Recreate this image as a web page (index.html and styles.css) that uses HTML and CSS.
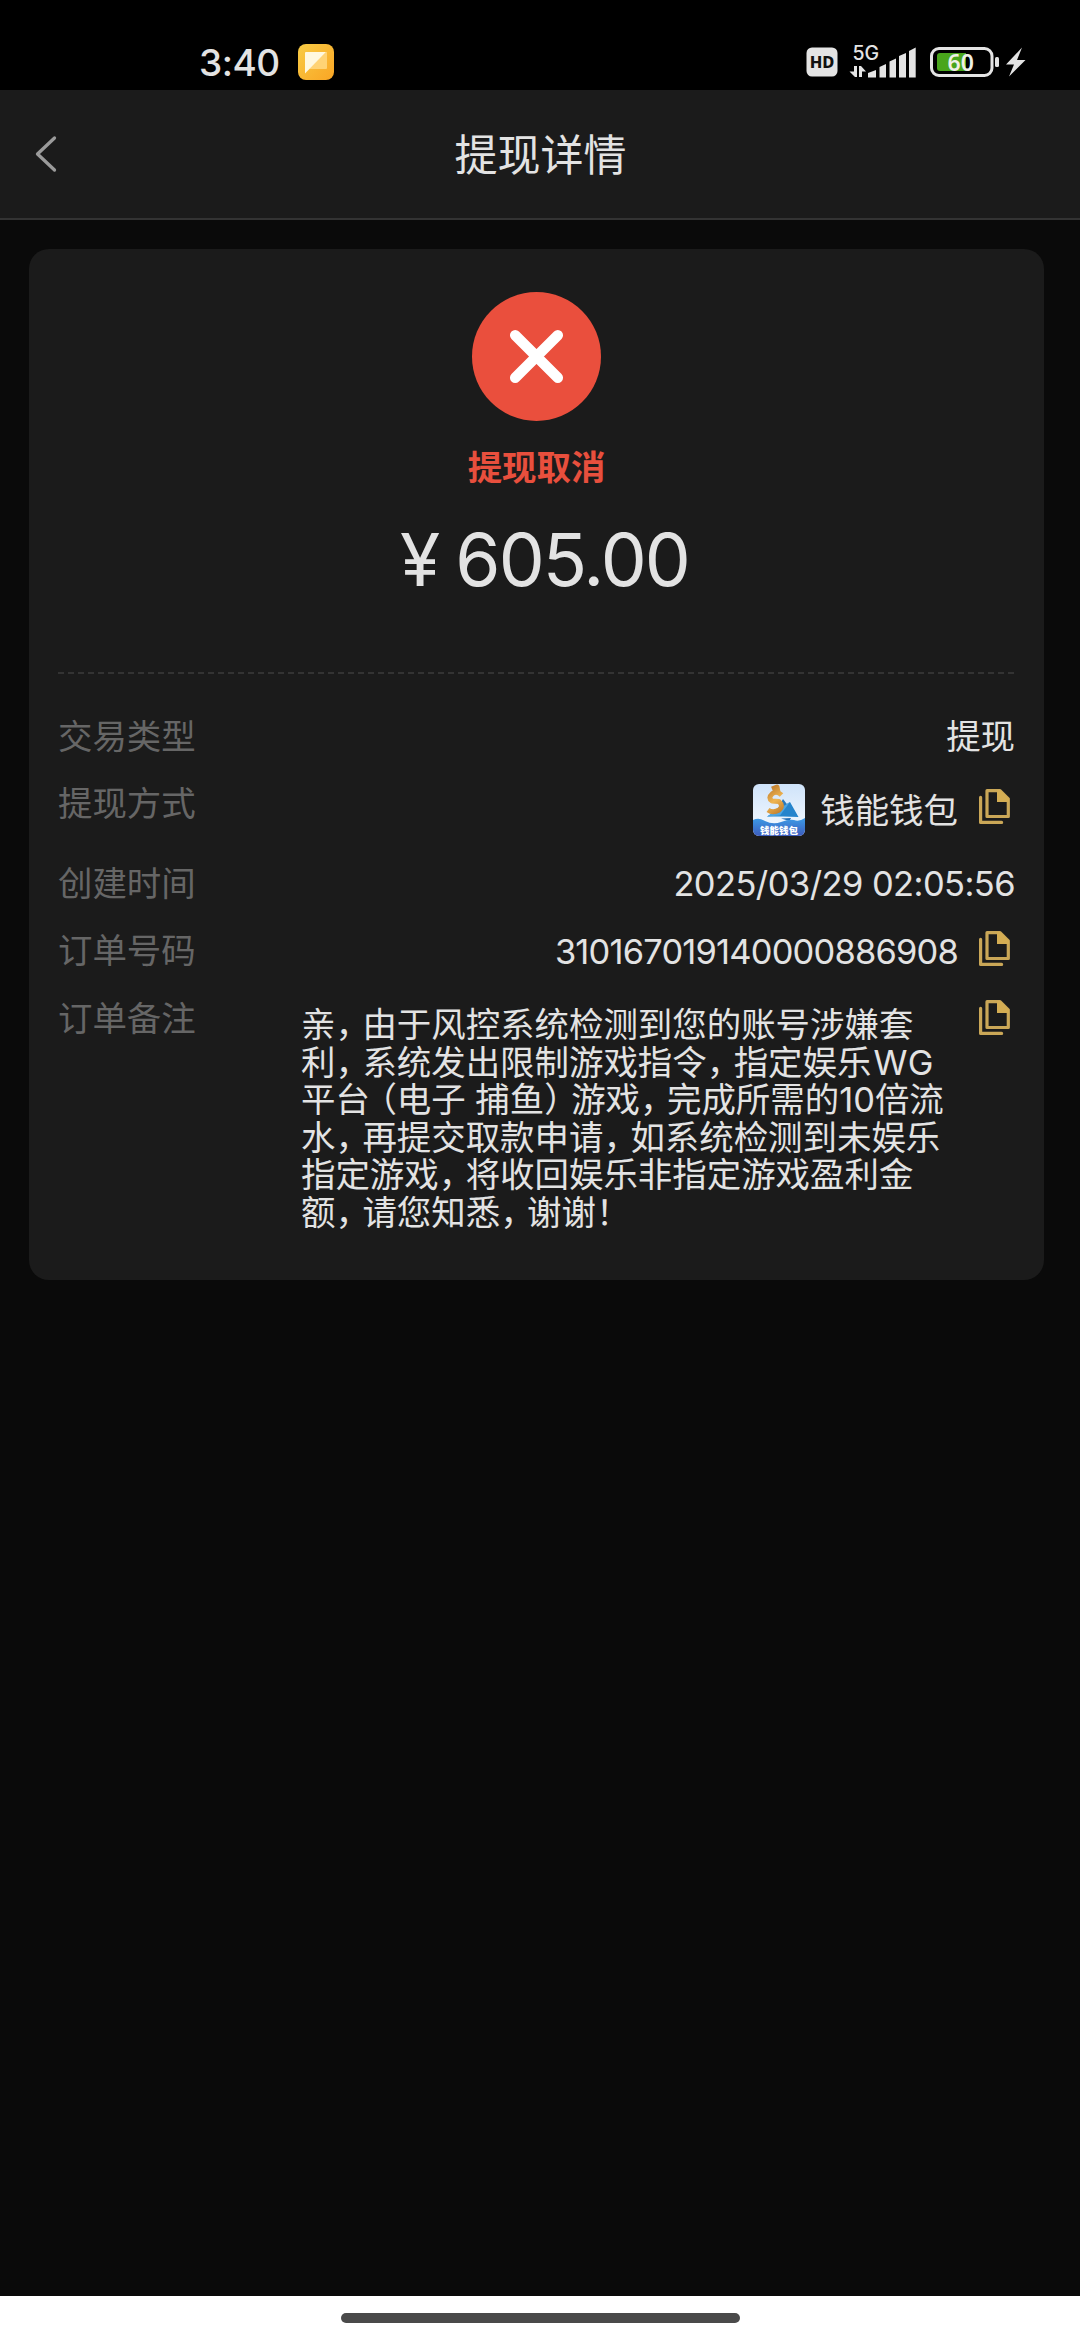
FILE: index.html
```html
<!DOCTYPE html>
<html lang="zh-CN">
<head>
<meta charset="utf-8">
<title>提现详情</title>
<link rel="stylesheet" href="styles.css">
</head>
<body>
<svg class="defs" width="0" height="0" aria-hidden="true">
  <symbol id="copy" viewBox="0 0 31 35">
    <path d="M1.6 8.4V33.4H22.6" fill="none" stroke="#caa757" stroke-width="3.200" stroke-linecap="round" stroke-linejoin="round"/>
    <path d="M8 1.7H21L29.3 9.8V27.5H8Z" fill="none" stroke="#caa757" stroke-width="3.200" stroke-linejoin="round"/>
    <path d="M18 1V13H30V9.5L21.4 1Z" fill="#d4ad53"/>
  </symbol>
</svg>
<div class="screen">
  <div class="statusbar">
    <div class="clock">3:40</div>
    <svg class="app-badge" viewBox="0 0 36 36">
      <defs>
        <linearGradient id="badge" x1="0" y1="0" x2="1" y2="1"><stop offset="0" stop-color="#f8cc45"/><stop offset="1" stop-color="#faa524"/></linearGradient>
      </defs>
      <rect width="36" height="36" rx="8" fill="url(#badge)"/>
      <path d="M28 8H29V24Q29 25 28 25H11Z" fill="#ffd375"/>
      <path d="M8 8H28L7 29.5V9Q7 8 8 8Z" fill="#fff8df"/>
    </svg>
    <svg class="system" viewBox="800 40 230 42">
      <rect x="806.500" y="47.500" width="31" height="29" rx="5.500" fill="#e4e4e4"/>
      <text x="822" y="68" class="hd" text-anchor="middle">HD</text>
      <text x="852.500" y="60" class="net" textLength="26.500">5G</text>
      <g fill="#e4e4e4">
        <path d="M854 66H857V77H855L849.500 71.500H854Z"/>
        <path d="M859 77V66H861L866 71.500H862V77Z"/>
        <path d="M868 77.500V73L876 70V77.500ZM879.500 77.500V67L886 64V77.500ZM889.500 77.500V61.500L896 58.500V77.500ZM899 77.500V56L906 53V77.500ZM909 77.500V51L915.700 47.500V77.500Z"/>
        <rect x="995" y="57" width="4" height="10" rx="1.500"/>
        <path d="M1022 47.500L1006 64.500H1014L1009 76.500L1025.500 60H1017Z"/>
      </g>
      <rect x="931.500" y="48.500" width="60.500" height="27" rx="7.500" fill="none" stroke="#e4e4e4" stroke-width="3"/>
      <path d="M940 53H966V71H940Q937 71 937 68V56Q937 53 940 53Z" fill="#49a51c"/>
      <text x="947.500" y="71" class="level">60</text>
    </svg>
  </div>

  <header class="navbar">
    <svg class="back" viewBox="0 0 24 38"><path d="M20.500 3L3.500 19L20.500 35" fill="none" stroke="#9b9b9b" stroke-width="3.300" stroke-linecap="round" stroke-linejoin="round"/></svg>
    <h1 class="title">提现详情</h1>
  </header>

  <main class="content">
    <section class="card">
      <svg class="result" viewBox="0 0 129 129"><circle cx="64.500" cy="64.500" r="64.500" fill="#ea4f3d"/><path d="M43.200 43.200L85.800 85.800M85.800 43.200L43.200 85.800" stroke="#fff" stroke-width="10.500" stroke-linecap="round"/></svg>
      <div class="status">提现取消</div>
      <div class="amount"><span class="yen">¥</span><span>605.00</span></div>
      <div class="divider"></div>
      <div class="rows">
        <div class="row"><div class="label">交易类型</div><div class="value">提现</div></div>
        <div class="row row-method">
          <div class="label">提现方式</div>
          <div class="value">
            <svg class="wallet" viewBox="0 0 52 52">
              <defs>
                <linearGradient id="sky" x1="0" y1="0" x2="0" y2="1"><stop offset="0" stop-color="#cfe3fa"/><stop offset="1" stop-color="#f8fcff"/></linearGradient>
                <linearGradient id="sea" x1="0" y1="0" x2="0" y2="1"><stop offset="0" stop-color="#3c9be6"/><stop offset="1" stop-color="#3d5cbd"/></linearGradient>
                <linearGradient id="gold" gradientUnits="userSpaceOnUse" x1="13" y1="3" x2="31" y2="30"><stop offset="0" stop-color="#b97528"/><stop offset=".5" stop-color="#efb552"/><stop offset="1" stop-color="#b77326"/></linearGradient>
                <clipPath id="tile"><rect width="52" height="52" rx="6"/></clipPath>
              </defs>
              <g clip-path="url(#tile)">
                <rect width="52" height="52" fill="url(#sky)"/>
                <path d="M30 15L37 24L22 30Z" fill="#2779bd"/>
                <path d="M14 32.500L37 18L45.500 33L30 32.500Z" fill="#2584cc"/>
                <path d="M14 32.500L37 18L27 31.500Z" fill="#4ca5e2"/>
                <path d="M28 34.500L38 34L36.500 37Z" fill="#2270b8"/>
                <path d="M19 5L24 3L25 8M28.500 11Q24 6.500 19.500 9.500Q14.500 14 19 17L26 17.500Q31 22 26 26Q20 29.500 15 26" fill="none" stroke="url(#gold)" stroke-width="5" stroke-linejoin="round"/>
                <path d="M0 36Q6 33 12 37Q20 41 28 38Q36 35 41 36Q46 38 52 34V52H0Z" fill="url(#sea)"/>
                <text x="26" y="49.500" text-anchor="middle" class="wallet-name" textLength="38">钱能钱包</text>
              </g>
            </svg>
            <span class="method-name">钱能钱包</span>
            <svg class="copy"><use href="#copy"/></svg>
          </div>
        </div>
        <div class="row"><div class="label">创建时间</div><div class="value date">2025/03/29 02:05:56</div></div>
        <div class="row row-order"><div class="label">订单号码</div><div class="value"><span class="order">310167019140000886908</span><svg class="copy"><use href="#copy"/></svg></div></div>
        <div class="row row-note">
          <div class="label">订单备注</div>
          <div class="note">
            <span class="line">亲<i class="p">，</i>由于风控系统检测到您的账号涉嫌套</span>
            <span class="line">利<i class="p">，</i>系统发出限制游戏指令<i class="p">，</i>指定娱乐<span class="brand">WG</span></span>
            <span class="line">平台<i class="open">（</i>电子 捕鱼<i class="p">）</i>游戏<i class="p">，</i>完成所需的10倍流</span>
            <span class="line">水<i class="p">，</i>再提交取款申请<i class="p">，</i>如系统检测到未娱乐</span>
            <span class="line">指定游戏<i class="p">，</i>将收回娱乐非指定游戏盈利金</span>
            <span class="line">额<i class="p">，</i>请您知悉<i class="p">，</i>谢谢！</span>
          </div>
          <svg class="copy"><use href="#copy"/></svg>
        </div>
      </div>
    </section>
  </main>
  <footer class="gesture"><div class="pill"></div></footer>
</div>
</body>
</html>
```

FILE: styles.css
```css
* { box-sizing: border-box; }
body {
  margin: 0;
  background: #0a0a0a;
  color: #e3e3e3;
  font-family: Inter, "Noto Sans CJK SC", sans-serif;
  font-size: 34.45px;
}
svg { display: block; flex: none; }
.defs { position: absolute; }
.screen { display: flex; flex-direction: column; width: 1080px; height: 2340px; }

.statusbar { display: flex; height: 90px; padding-left: 199px; background: #000; }
.clock { width: 99px; padding-top: 40px; font-size: 37px; line-height: 45px; font-weight: 500; letter-spacing: -0.5px; }
.app-badge { width: 36px; height: 36px; margin-top: 44px; }
.system { width: 230px; height: 42px; margin: 40px 0 0 466px; }
.hd { font-family: "Noto Sans", sans-serif; font-size: 16.5px; font-weight: 800; fill: #111; }
.net { font-size: 19.5px; font-weight: 500; fill: #e4e4e4; }
.level { font-family: "Noto Sans", sans-serif; font-size: 23px; font-weight: 600; fill: #f0f0e6; }

.navbar { display: flex; align-items: center; height: 130px; padding-left: 34px; background: #1b1b1b; border-bottom: 2px solid #333; }
.back { width: 24px; height: 38px; }
.title { flex: 1; margin: 0 57px 0 0; padding-top: 1px; text-align: center; font-size: 43px; font-weight: 400; line-height: 60px; }

.content { flex: 1; padding: 29px 36px 0 29px; }
.card { display: flex; flex-direction: column; align-items: center; height: 1031px; padding: 43px 29px 0; border-radius: 20px; background: #1b1b1b; }
.result { width: 129px; height: 129px; }
.status { margin-top: 22px; color: #e84f3d; font-weight: 700; line-height: 50px; }
.amount { display: flex; gap: 17px; margin: 23px 0 0 16px; font-size: 73px; line-height: 88px; letter-spacing: -1.9px; }
.divider { align-self: stretch; height: 2px; margin-top: 68px; background: repeating-linear-gradient(90deg, #333 0 6px, transparent 6px 10px); }

.rows { align-self: stretch; padding-top: 29px; }
.row { display: flex; justify-content: space-between; height: 67px; line-height: 67px; }
.row-method { height: 80px; }
.row-order { height: 68px; }
.label { width: 140px; color: #666; }
.value { display: flex; align-items: center; }
.wallet { width: 52px; height: 52px; margin-right: 15px; }
.wallet-name { font-size: 9.5px; font-weight: 900; fill: #fff; }
.copy { width: 31px; height: 35px; margin: 0 5px 0 21px; }
.row-method .copy { margin-bottom: 7px; }
.row-order .copy { margin-bottom: 6px; }
.date { letter-spacing: -0.55px; }
.order { letter-spacing: -0.8px; }
.note { flex: 1; padding: 21px 0 0 103px; line-height: 37.6px; }
.line { display: block; white-space: nowrap; }
.p, .open { font-style: normal; letter-spacing: -7.5px; }
.open { margin-left: -7.5px; letter-spacing: 0; }
.brand { padding-left: 2px; letter-spacing: 0.5px; }
.row-note .copy { margin-top: 15px; }

.gesture { display: flex; justify-content: center; height: 44px; padding-top: 17px; background: #fff; }
.pill { width: 399px; height: 10px; border-radius: 5px; background: #4a4a4a; }
```
